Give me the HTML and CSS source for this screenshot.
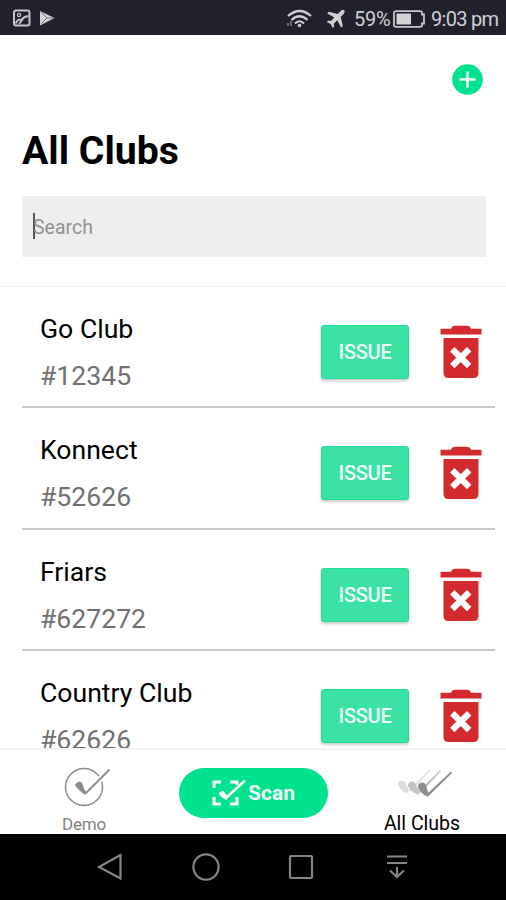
FILE: index.html
```html
<!DOCTYPE html>
<html lang="en">
<head>
<meta charset="utf-8">
<title>All Clubs</title>
<link rel="stylesheet" href="styles.css">
</head>
<body>
<svg class="defs" width="0" height="0" aria-hidden="true">
  <symbol id="trash" viewBox="0 0 42 54">
    <path fill="#d32a2e" d="M0.5 3.800H11Q12 .8 15 .8H27Q30 .8 31 3.800H41.500V9.500H.5ZM3.500 13H38.500V48Q38.500 53 33.500 53H8.500Q3.500 53 3.500 48Z"/>
    <path d="M12.300 24.200L29.200 41M29.200 24.200L12.300 41" stroke="#fff" stroke-width="6.200"/>
  </symbol>
</svg>
<div class="status">
  <svg width="46" height="20" viewBox="0 0 46 20" fill="none" stroke="#c4c4c8" stroke-width="2">
    <rect x="2" y="1.500" width="15.500" height="15" rx="2"/>
    <path d="M3.500 14.500Q6 9.500 9 11Q12 7.500 16.500 7M7 15L11 10" stroke-width="1.800"/><circle cx="7" cy="6" r="1.600" stroke-width="1.300"/>
    <path d="M28 2L42.500 9L28 16.500Z" fill="#d4d4d6" stroke="none"/><path d="M29 3L35 9L29 15M35 9H41" stroke="#777780" stroke-width="1"/>
  </svg>
  <div class="status-right">
    <svg class="wifi" width="27" height="20" viewBox="0 0 27 20" fill="none" stroke="#d0d0d3" stroke-width="2.200">
      <path d="M2 7Q13.500 -3 25 7M5.500 11Q13.500 3.500 21.500 11M9 14.500Q13.500 10 18 14.500"/>
      <circle cx="13.500" cy="16.500" r="1.800" fill="#d0d0d3" stroke="none"/>
      <path d="M2 14V17M5 12V17" stroke-width="1.500" stroke="#85858c"/>
    </svg>
    <svg class="plane" width="20" height="20" viewBox="0 0 20 20"><path fill="#d0d0d3" d="M18.300 1.200Q16.800 .2 15 1.800L11.700 5L2.800 2.800L1.200 4.400L8.400 8.400L4.900 12L2.200 11.600L.8 13L4.700 15L6.800 18.900L8.200 17.500L7.800 14.800L11.300 11.300L15.200 18.500L16.800 16.900L14.700 8L17.800 4.800Q19.300 2.500 18.300 1.200Z"/></svg>
    <span class="percent">59%</span>
    <svg class="battery" width="33" height="18" viewBox="0 0 33 18"><path d="M3 1.200H27Q29 1.200 29 3V4.500H31V13.500H29V15Q29 16.800 27 16.800H3Q1 16.800 1 15V3Q1 1.200 3 1.200Z" fill="none" stroke="#c8c8ca" stroke-width="1.800"/><path d="M3.500 3.500H18V14.500H3.500Z" fill="#d4d4d6"/></svg>
    <span class="time">9:03 pm</span>
  </div>
</div>
<header class="header">
  <button class="add" aria-label="Add"><svg width="31" height="31" viewBox="0 0 31 31"><circle cx="15.500" cy="15.500" r="15.300" fill="#00e28e"/><path d="M15.500 7.500V23.500M7.500 15.500H23.500" stroke="#fff" stroke-width="2.400"/></svg></button>
  <h1>All Clubs</h1>
  <div class="search"><i class="caret"></i><span>Search</span></div>
</header>
<main class="list">
  <section class="row"><div class="club"><h2>Go Club</h2><p>#12345</p></div><button class="issue">ISSUE</button><svg class="trash"><use href="#trash"/></svg></section>
  <section class="row"><div class="club"><h2>Konnect</h2><p>#52626</p></div><button class="issue">ISSUE</button><svg class="trash"><use href="#trash"/></svg></section>
  <section class="row"><div class="club"><h2>Friars</h2><p>#627272</p></div><button class="issue">ISSUE</button><svg class="trash"><use href="#trash"/></svg></section>
  <section class="row"><div class="club"><h2>Country Club</h2><p>#62626</p></div><button class="issue">ISSUE</button><svg class="trash"><use href="#trash"/></svg></section>
</main>
<nav class="tabs">
  <div class="tab demo">
    <svg width="48" height="42" viewBox="0 0 48 42"><circle cx="21" cy="21" r="18.500" fill="none" stroke="#8b8b8b" stroke-width="1.500"/><path d="M23 27L46 4" stroke="#fff" stroke-width="6"/><path d="M23 27L46.500 3.500" stroke="#8b8b8b" stroke-width="1.800"/><path d="M12.300 20Q11.800 17 16.500 15.500Q19 15.500 19.500 18L21.500 24L24 27L21.800 28.800Q17 25.500 12.300 20Z" fill="#8b8b8b"/></svg>
    <span>Demo</span>
  </div>
  <button class="scan"><svg width="36" height="28" viewBox="0 0 36 28"><path d="M2 9V3H9M18 3H25V6M25 18V25H18M9 25H2V18" fill="none" stroke="#fff" stroke-width="3"/><path d="M14 19L33 1.500" stroke="#fff" stroke-width="2.600"/><path d="M6.500 14L11 11.500L15.500 17.500L14.500 21Q9 19 6.500 14Z" fill="#fff"/></svg><span>Scan</span></button>
  <div class="tab all">
    <svg width="58" height="32" viewBox="0 0 58 32"><g fill="#dedede"><path d="M2 17Q1 13 6 12.500Q9 12.500 10 16L13 22L11 25.500Q4 22 2 17Z"/><path d="M13 22L34 1L35 2L14 24Z"/></g><g fill="#c3c3c3"><path d="M12 18Q11.500 14 16 13.500Q19 13.500 20 17L24 24L22 27Q14 23 12 18Z"/><path d="M23 23L44 2L45 3L25 25Z"/></g><g fill="#8d8d8d"><path d="M22 19Q21.500 15 26 14.500Q30 14.500 30.500 19L32.500 25.500L31 28.500Q24 25 22 19Z"/><path d="M31 26L55 3.500L56.300 4.800L31.500 29Z"/></g></svg>
    <span>All Clubs</span>
  </div>
</nav>
<footer class="system">
  <svg width="28" height="30" viewBox="0 0 28 30"><path d="M24.500 3L3 15L24.500 26.500Z"/></svg>
  <svg width="30" height="30" viewBox="0 0 30 30"><circle cx="15" cy="15" r="12.600"/></svg>
  <svg width="26" height="30" viewBox="0 0 26 30"><rect x="2" y="4" width="22" height="22" rx="1"/></svg>
  <svg width="22" height="30" viewBox="0 0 22 30"><path d="M1 4.500H21M1 11H21M11 15V25M4 18.500L11 25L18 18.500"/></svg>
</footer>
</body>
</html>
```
FILE: styles.css
```css
* { box-sizing: border-box; }
html, body { margin: 0; }
body { width: 506px; height: 900px; overflow: hidden; display: flex; flex-direction: column; background: #fff; color: #000; font-family: Roboto, sans-serif; }
h1, h2, p { margin: 0; }
button { border: 0; padding: 0; font-family: inherit; }
svg { display: block; flex: none; }
.defs { position: absolute; }

.status { flex: none; height: 35px; padding: 0 8px 0 12px; display: flex; align-items: center; justify-content: space-between; background: #20212d; color: #d0d0d3; }
.status > svg { margin-top: 2px; }
.status-right { display: flex; align-items: center; height: 35px; padding-top: 2px; font-size: 20px; line-height: 24px; }
.wifi { margin-right: 13px; }
.plane { margin-right: 8px; }
.percent { width: 38px; letter-spacing: -.3px; }
.battery { margin: 0 5px 0 1px; }
.time { width: 67px; white-space: nowrap; letter-spacing: -.7px; }

.header { flex: none; height: 252px; padding: 29px 20px 0 22px; display: flex; flex-direction: column; border-bottom: 1px solid #f1f1f1; }
.add { align-self: flex-end; margin-right: 3px; height: 31px; background: none; }
h1 { margin-top: 31px; font-size: 39.200px; line-height: 50px; font-weight: 700; white-space: nowrap; }
.search { margin-top: 20px; height: 61px; padding: 2px 0 0 11px; display: flex; align-items: center; background: #eee; color: #919191; font-size: 19.500px; }
.caret { width: 2px; height: 26px; margin: -3px -2px 0 0; background: #555; }

.list { flex: none; height: 461px; overflow: hidden; }
.row { height: 121.300px; margin: 0 11px 0 22px; padding: 0 13px 0 18px; display: flex; align-items: flex-start; border-bottom: 2px solid #c9c9c9; }
.club { flex: 1; padding-top: 24px; }
.club h2 { font-size: 26.600px; line-height: 36px; font-weight: 400; }
.club p { margin-top: 11px; font-size: 26.600px; line-height: 36px; color: #707070; }
.issue { margin: 38px 31px 0 0; width: 88px; height: 54px; border-radius: 3px; border: 1px solid #23dc96; background: #3ce1a4; color: #edfff7; box-shadow: 0 2px 3px #0003; font-size: 20px; font-weight: 500; letter-spacing: -.3px; }
.trash { margin-top: 38px; width: 42px; height: 54px; }

.tabs { flex: none; height: 86px; padding: 0 0 1px; display: grid; grid-template-columns: 168px 170px 168px; border-top: 2px solid #f3f3f3; background: #fff; }
.tab { display: flex; flex-direction: column; align-items: center; line-height: 20px; }
.demo { padding-top: 16px; color: #828282; font-size: 17px; }
.demo svg { margin-left: 6px; }
.demo span { margin-top: 6px; letter-spacing: -.2px; }
.all { padding-top: 18px; font-size: 19.500px; }
.all svg { margin-left: 5px; }
.all span { margin-top: 14px; }
.scan { margin: 18px 10px 0 11px; height: 50px; border-radius: 25px; background: #00e28e; color: #edfff7; display: flex; align-items: center; justify-content: center; font-size: 21px; font-weight: 700; }
.system { flex: none; height: 66px; display: flex; align-items: center; padding-left: 96px; background: #000; }
.system svg { fill: none; stroke: #858585; stroke-width: 2.200; }
.system svg + svg { margin-left: 67px; }
.system svg:last-child { margin-left: 72px; }
```
